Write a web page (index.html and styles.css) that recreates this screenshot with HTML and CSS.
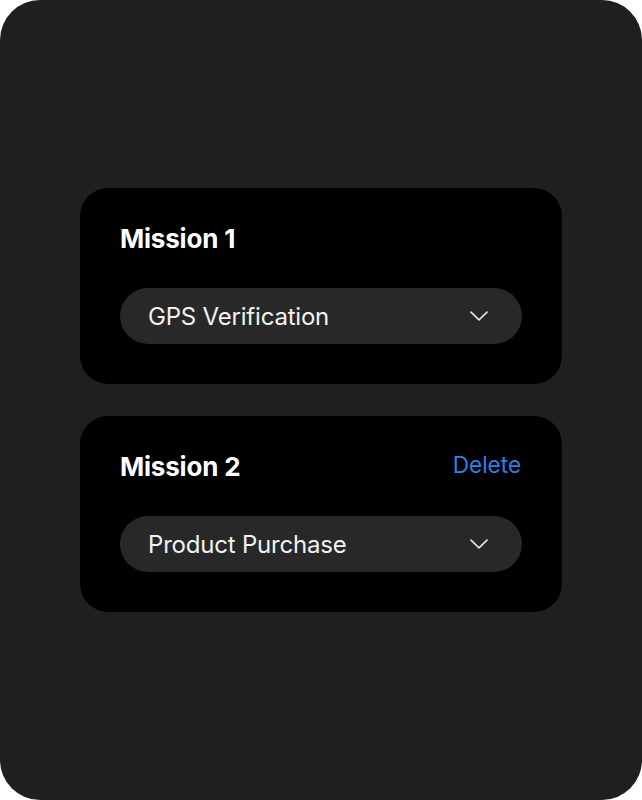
FILE: index.html
```html
<!DOCTYPE html>
<html lang="en">
<head>
<meta charset="utf-8">
<link rel="stylesheet" href="styles.css">
</head>
<body>
<div class="frame">
  <div class="stack">
    <section class="card">
      <div class="card-head">
        <h2 class="title">Mission 1</h2>
      </div>
      <div class="select">
        <span class="select-label">GPS Verification</span>
        <svg class="chev" width="18" height="10" viewBox="0 0 18 10"><path d="M1 1.2 L9 8.8 L17 1.2" fill="none" stroke="#e0e0e0" stroke-width="1.7" stroke-linecap="round" stroke-linejoin="round"/></svg>
      </div>
    </section>
    <section class="card">
      <div class="card-head">
        <h2 class="title">Mission 2</h2>
        <span class="delete">Delete</span>
      </div>
      <div class="select">
        <span class="select-label">Product Purchase</span>
        <svg class="chev" width="18" height="10" viewBox="0 0 18 10"><path d="M1 1.2 L9 8.8 L17 1.2" fill="none" stroke="#e0e0e0" stroke-width="1.7" stroke-linecap="round" stroke-linejoin="round"/></svg>
      </div>
    </section>
  </div>
</div>
</body>
</html>
```

FILE: styles.css
```css
html, body {
  margin: 0;
  padding: 0;
  background: #ffffff;
}
body {
  font-family: Inter, "Noto Sans", "Liberation Sans", sans-serif;
}
.frame {
  width: 642px;
  height: 800px;
  box-sizing: border-box;
  background: #1f1f21;
  border-radius: 40px;
  display: flex;
  align-items: center;
  justify-content: center;
}
.stack {
  width: 482px;
  display: flex;
  flex-direction: column;
  gap: 32px;
}
.card {
  background: #000000;
  border-radius: 28px;
  padding: 33px 41px 40px 40px;
  box-shadow: 0 0 16px rgba(255, 255, 255, 0.025);
}
.card-head {
  display: flex;
  justify-content: space-between;
  align-items: baseline;
  height: 34px;
  margin-bottom: 33px;
}
.title {
  margin: 0;
  font-size: 26px;
  line-height: 35px;
  font-weight: 700;
  color: #ffffff;
  letter-spacing: -0.2px;
}
.delete {
  font-size: 22.5px;
  line-height: 30px;
  color: #2f80e4;
  position: relative;
  top: -3px;
}
.select {
  height: 56px;
  border-radius: 28px;
  background: #282829;
  display: flex;
  align-items: center;
  justify-content: space-between;
  padding: 0 34px 0 28px;
  margin-right: -1px;
}
.select-label {
  font-size: 24px;
  color: #f2f2f2;
  letter-spacing: -0.2px;
}
.chev {
  display: block;
}
```
